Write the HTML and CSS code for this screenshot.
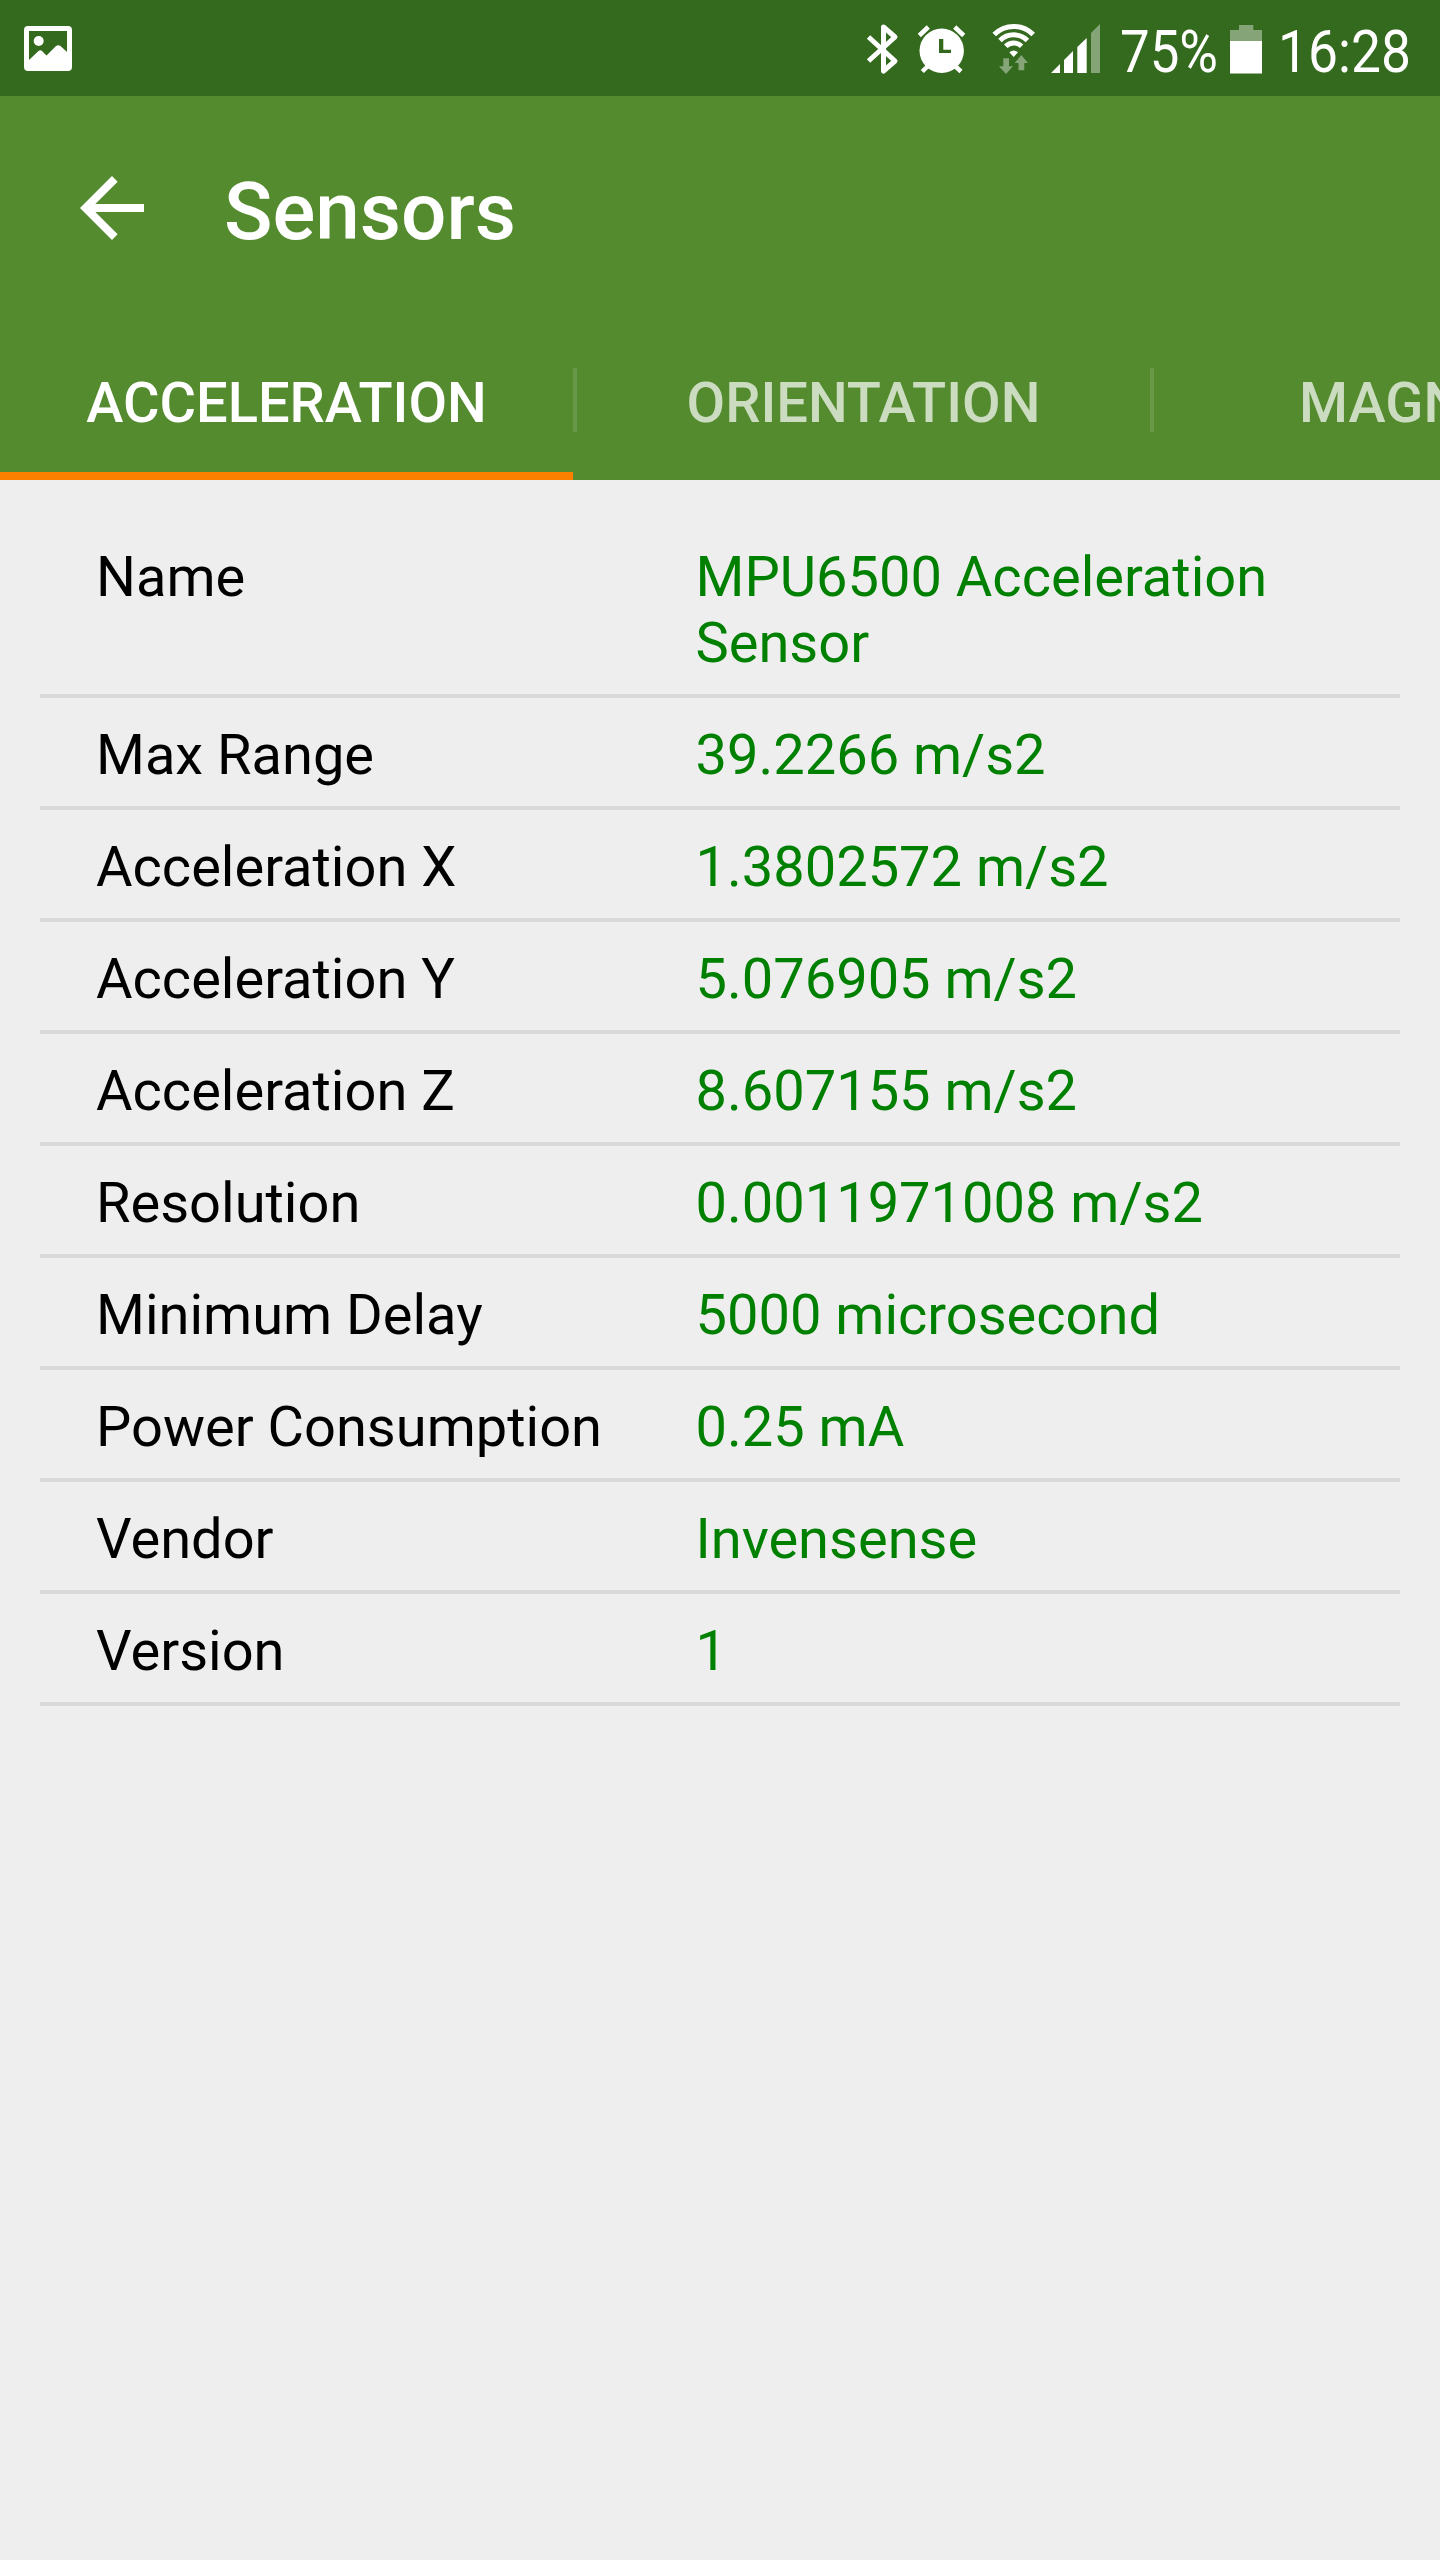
FILE: index.html
```html
<!DOCTYPE html>
<html lang="en">
<head>
  <meta charset="UTF-8">
  <title>Sensors</title>
  <link rel="stylesheet" href="styles.css">
</head>
<body>
  <div class="status-bar">
    <svg class="icon-picture" width="48" height="46" viewBox="0 0 48 46">
      <path fill="#fff" fill-rule="evenodd" d="M4 0H44Q48 0 48 4V41Q48 45 44 45H4Q0 45 0 41V4Q0 0 4 0ZM5 5V34L14.500 25Q16.300 23.600 18 25L22.500 29.500L32 20Q34.300 18.300 36.500 20L43 26V5Z"/>
      <circle cx="14.700" cy="15" r="5" fill="#fff"/>
    </svg>
    <div class="status-right">
      <svg class="icon-bluetooth" width="34" height="52" viewBox="0 0 34 52">
        <path fill="none" stroke="#fff" stroke-width="5" stroke-linejoin="round" d="M3.500 14L30 38L18.500 48V4L30 14L3.500 38"/>
      </svg>
      <svg class="icon-alarm" width="50" height="52" viewBox="0 0 50 52">
        <circle cx="24.700" cy="27.700" r="22.200" fill="#fff"/>
        <path stroke="#fff" stroke-width="4.500" d="M2.300 12.500L11.300 4M37.700 4L46.700 12.500M5.300 48.500L12 42M44 48.500L37 42"/>
        <path fill="#346a1e" d="M22 16H26.300V26.700H34V30H22Z"/>
      </svg>
      <svg class="icon-wifi" width="44" height="52" viewBox="0 0 44 52">
        <g fill="none" stroke="#fff" stroke-width="5">
          <path d="M2.200 11.600A27.500 27.500 0 0 1 41.200 11.600"/>
          <path d="M8 17.500A19.300 19.300 0 0 1 35.400 17.500"/>
          <path d="M13.800 23.300A11 11 0 0 1 29.600 23.300"/>
        </g>
        <path fill="#fff" d="M17.300 29.300Q21.700 25.600 26 29.300L21.700 34Z"/>
        <g fill="#fff" opacity=".4">
          <path d="M11.300 35.300H17V43.300H21L14 51L7 43.300H11.300Z"/>
          <path d="M29.300 32L36 40H32.300V47.300H26.500V40H22.700Z"/>
        </g>
      </svg>
      <svg class="icon-signal" width="50" height="49" viewBox="0 0 50 49">
        <path fill="#fff" d="M0 49L9 40V49ZM13 49V36L22 27V49ZM26.300 49V23L35.700 14V49Z"/>
        <path fill="#fff" opacity=".4" d="M40 49V9L49 0V49Z"/>
      </svg>
      <span class="battery-text">75%</span>
      <svg class="icon-battery" width="32" height="49" viewBox="0 0 32 49">
        <path fill="#fff" opacity=".4" d="M9 0H23.300V5H32V16H0V5H9Z"/>
        <path fill="#fff" d="M0 16H32V48.500H0Z"/>
      </svg>
      <span class="clock">16:28</span>
    </div>
  </div>

  <header class="app-bar">
    <div class="toolbar">
      <svg class="back" width="96" height="96" viewBox="0 0 24 24">
        <path fill="#fff" d="M20 11H7.830l5.590-5.590L12 4l-8 8 8 8 1.410-1.410L7.830 13H20v-2z"/>
      </svg>
      <h1>Sensors</h1>
    </div>
    <nav class="tabs">
      <div class="tab active">ACCELERATION</div>
      <div class="divider"></div>
      <div class="tab">ORIENTATION</div>
      <div class="divider"></div>
      <div class="tab">MAGNETIC</div>
    </nav>
  </header>

  <main class="sensor-list">
    <div class="row"><div class="label">Name</div><div class="value">MPU6500 Acceleration Sensor</div></div>
    <div class="row"><div class="label">Max Range</div><div class="value">39.2266 m/s2</div></div>
    <div class="row"><div class="label">Acceleration X</div><div class="value">1.3802572 m/s2</div></div>
    <div class="row"><div class="label">Acceleration Y</div><div class="value">5.076905 m/s2</div></div>
    <div class="row"><div class="label">Acceleration Z</div><div class="value">8.607155 m/s2</div></div>
    <div class="row"><div class="label">Resolution</div><div class="value">0.0011971008 m/s2</div></div>
    <div class="row"><div class="label">Minimum Delay</div><div class="value">5000 microsecond</div></div>
    <div class="row"><div class="label">Power Consumption</div><div class="value">0.25 mA</div></div>
    <div class="row"><div class="label">Vendor</div><div class="value">Invensense</div></div>
    <div class="row"><div class="label">Version</div><div class="value">1</div></div>
  </main>
</body>
</html>
```
FILE: styles.css
```css
* { box-sizing: border-box; }
body {
  margin: 0;
  width: 1440px; min-height: 2560px;
  font-family: Roboto, sans-serif;
  background: #eeeeee;
  overflow-x: hidden;
}
svg { display: block; flex: none; }

.status-bar {
  display: flex; justify-content: space-between; align-items: flex-start;
  height: 96px; padding-left: 24px;
  background: #346a1e; color: #ffffff;
}
.icon-picture { margin-top: 26px; }
.status-right { display: flex; align-items: flex-start; width: 575px; }
.icon-bluetooth { margin-top: 23px; }
.icon-alarm { margin: 23px 0 0 18px; }
.icon-wifi { margin: 23px 0 0 25px; }
.icon-signal { margin: 24px 0 0 15px; }
.battery-text, .clock {
  font-size: 60px; line-height: 70px; margin-top: 17px;
  transform: scaleX(0.88); transform-origin: left top;
  white-space: nowrap;
}
.battery-text { width: 109px; margin-left: 19px; }
.icon-battery { margin-top: 25px; margin-left: 1px; }
.clock { width: 150px; margin-left: 16px; transform: scaleX(0.89); }

.app-bar { height: 384px; background: #558b2f; color: #ffffff; }
.toolbar { display: flex; align-items: center; height: 224px; padding-left: 64px; }
.toolbar h1 {
  margin: 7px 0 0 64px;
  font-size: 80px; line-height: 94px; font-weight: 500;
}
.tabs { display: flex; height: 160px; overflow: hidden; }
.tab {
  flex: none; width: 573px; height: 160px; padding-top: 50px;
  font-size: 56px; line-height: 66px; font-weight: 500; text-align: center;
  color: rgba(255,255,255,0.7);
}
.tab.active { color: #ffffff; border-bottom: 8px solid #fb8000; }
.divider { flex: none; width: 4px; height: 64px; margin-top: 48px; background: rgba(255,255,255,0.12); }

.sensor-list { padding: 40px 40px 0; font-size: 56px; line-height: 66px; }
.row { display: flex; padding: 24px 56px 18px; border-bottom: 4px solid #d8d8d8; }
.label { flex: none; width: 599.5px; color: #000000; }
.value { flex: 1; color: #008000; }
```
